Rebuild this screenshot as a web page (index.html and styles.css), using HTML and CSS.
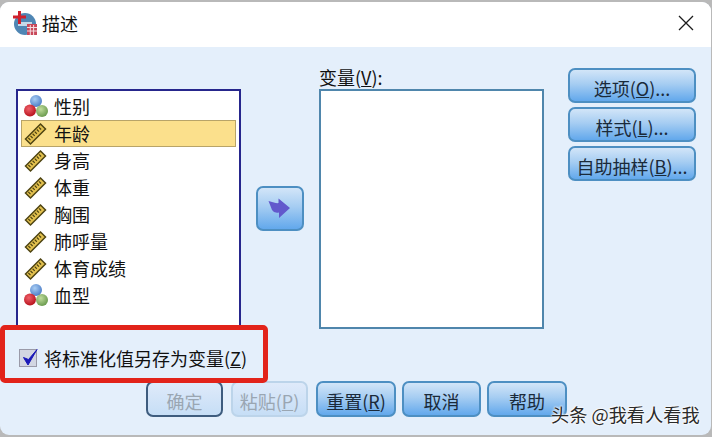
FILE: index.html
```html
<!DOCTYPE html>
<html lang="zh">
<head>
    <meta charset="UTF-8">
    <title>描述</title>
    <link rel="stylesheet" href="styles.css">
</head>
<body>
    <svg class="defs" width="0" height="0">
        <defs>
            <radialGradient id="ballBlue" cx="40%" cy="35%" r="65%">
                <stop offset="0" stop-color="#a8cdf4"/>
                <stop offset="1" stop-color="#4f80c8"/>
            </radialGradient>
            <radialGradient id="ballRed" cx="40%" cy="35%" r="65%">
                <stop offset="0" stop-color="#f0606a"/>
                <stop offset="1" stop-color="#b8141e"/>
            </radialGradient>
            <radialGradient id="ballGreen" cx="40%" cy="35%" r="65%">
                <stop offset="0" stop-color="#c0dc9c"/>
                <stop offset="1" stop-color="#6c9c50"/>
            </radialGradient>
            <g id="ballIcon">
                <circle cx="12" cy="7" r="6" fill="url(#ballBlue)"/>
                <circle cx="18" cy="17" r="6" fill="url(#ballGreen)"/>
                <circle cx="6" cy="16.5" r="6" fill="url(#ballRed)"/>
            </g>
            <g id="rulerIcon">
                <path d="M1.5 18 L16.5 3 L21.5 8 L6.5 23 Z" fill="#e2c04e" stroke="#4e4412" stroke-width="1.5"/>
                <path d="M5 18.5 L17 6.5" stroke="#4e4412" stroke-width="3" stroke-dasharray="1.2 1.8" fill="none"/>
            </g>
        </defs>
    </svg>

    <div class="dialog">
        <div class="titlebar">
            <div class="title">
                <svg class="app-icon" width="26" height="26" viewBox="0 0 26 26">
                    <circle cx="13" cy="14" r="11" fill="#4f86b4"/>
                    <path d="M6 12 H20 V16 H6 Z" fill="#c4d8e8"/>
                    <path d="M7.5 1 V14 M1 7 H14" stroke="#d0202c" stroke-width="3"/>
                    <rect x="15" y="14" width="10" height="11" fill="#c8485a"/>
                    <path d="M15 17.5 H25 M15 21 H25 M18.3 15 V25 M21.6 15 V25" stroke="#f4dce0" stroke-width="1"/>
                </svg>
                <span>描述</span>
            </div>
            <svg class="close" width="16" height="16" viewBox="0 0 16 16">
                <path d="M1 1 L15 15 M15 1 L1 15" stroke="#1c1c1c" stroke-width="1.3" fill="none"/>
            </svg>
        </div>

        <div class="content">
            <div class="main">
                <ul class="source-list">
                    <li><svg class="var-icon" viewBox="0 0 25 25"><use href="#ballIcon"/></svg>性别</li>
                    <li class="selected"><svg class="var-icon" viewBox="0 0 25 25"><use href="#rulerIcon"/></svg>年龄</li>
                    <li><svg class="var-icon" viewBox="0 0 25 25"><use href="#rulerIcon"/></svg>身高</li>
                    <li><svg class="var-icon" viewBox="0 0 25 25"><use href="#rulerIcon"/></svg>体重</li>
                    <li><svg class="var-icon" viewBox="0 0 25 25"><use href="#rulerIcon"/></svg>胸围</li>
                    <li><svg class="var-icon" viewBox="0 0 25 25"><use href="#rulerIcon"/></svg>肺呼量</li>
                    <li><svg class="var-icon" viewBox="0 0 25 25"><use href="#rulerIcon"/></svg>体育成绩</li>
                    <li><svg class="var-icon" viewBox="0 0 25 25"><use href="#ballIcon"/></svg>血型</li>
                </ul>

                <div class="mover">
                    <button class="btn arrow-btn" type="button">
                        <svg width="24" height="22" viewBox="0 0 24 22">
                            <path d="M0.5 3 L4 4 Q8 5.5 10.5 5 V0.5 L22 10 L11 20 V14.5 Q6 15.5 4 12 Z" fill="#6258cc"/>
                        </svg>
                    </button>
                </div>

                <div class="target">
                    <div class="target-label">变量(<u>V</u>):</div>
                    <div class="target-list"></div>
                </div>

                <div class="side-buttons">
                    <button class="btn" type="button">选项(<u>O</u>)...</button>
                    <button class="btn" type="button">样式(<u>L</u>)...</button>
                    <button class="btn" type="button">自助抽样(<u>B</u>)...</button>
                </div>
            </div>

            <label class="save-row">
                <span class="checkbox">
                    <svg width="18" height="18" viewBox="0 0 18 18">
                        <path d="M3.5 8.5 L8 16 L17 0.5 L8.5 10.5 Z" fill="#1a1ab8" stroke="#1a1ab8" stroke-width="1"/>
                    </svg>
                </span>
                <span>将标准化值另存为变量(<u>Z</u>)</span>
            </label>

            <div class="bottom-buttons">
                <button class="btn disabled default" type="button">确定</button>
                <button class="btn disabled" type="button">粘贴(<u>P</u>)</button>
                <button class="btn wide" type="button">重置(<u>R</u>)</button>
                <button class="btn" type="button">取消</button>
                <button class="btn wide" type="button">帮助</button>
            </div>
        </div>

        <div class="highlight"></div>
        <div class="watermark">头条 @我看人看我</div>
    </div>
</body>
</html>
```

FILE: styles.css
```css
html, body {
    margin: 0;
    padding: 0;
}
body {
    width: 712px;
    height: 437px;
    overflow: hidden;
    background-color: #b9b9b9;
    font-family: "Noto Sans CJK SC", "Liberation Sans", sans-serif;
    color: #111;
}
.defs {
    display: block;
    height: 0;
}
.dialog {
    position: relative;
    box-sizing: border-box;
    width: 711px;
    height: 433px;
    margin-top: 2px;
    border-radius: 9px;
    overflow: hidden;
    background-color: #e4effb;
}
.titlebar {
    box-sizing: border-box;
    display: flex;
    justify-content: space-between;
    align-items: center;
    height: 45px;
    padding: 0 17px 3px 12px;
    background-color: #fff;
}
.title {
    display: flex;
    align-items: center;
    gap: 4px;
    font-size: 18px;
    color: #111;
}
.content {
    display: flex;
    flex-direction: column;
}
.main {
    display: flex;
    height: 262px;
    padding: 21px 0 0 16px;
}
.source-list {
    box-sizing: border-box;
    width: 225px;
    height: 241px;
    margin: 21px 0 0;
    padding: 2px 3px 0;
    list-style: none;
    background-color: #fff;
    border: 2px solid #26268c;
    border-bottom: none;
}
.source-list li {
    display: flex;
    align-items: center;
    gap: 5px;
    height: 27px;
    padding-left: 3px;
    font-size: 18px;
    line-height: 27px;
    white-space: nowrap;
}
.source-list li.selected {
    box-sizing: border-box;
    background-color: #fbe08c;
    border: 1px solid #b8a468;
    padding-left: 2px;
}
.var-icon {
    width: 25px;
    height: 25px;
    flex: none;
}
.mover {
    box-sizing: border-box;
    width: 78px;
    padding: 118px 0 0 15px;
}
.btn {
    box-sizing: border-box;
    height: 35px;
    padding: 4px 0 0;
    font-family: inherit;
    font-size: 18px;
    line-height: 1;
    color: #1a2a3a;
    white-space: nowrap;
    border: 2px solid #4d8fc2;
    border-radius: 7px;
    background: linear-gradient(#d2e5f8, #a6cdf2 45%, #62a8ec);
}
.arrow-btn {
    display: flex;
    align-items: center;
    justify-content: center;
    width: 48px;
    height: 45px;
    padding: 0;
}
.target {
    width: 225px;
}
.target-label {
    height: 21px;
    font-size: 18px;
    line-height: 19px;
}
.target-list {
    box-sizing: border-box;
    height: 240px;
    background-color: #fff;
    border: 2px solid #4f86ac;
}
.side-buttons {
    display: flex;
    flex-direction: column;
    gap: 4px;
    width: 128px;
    margin-left: 24px;
}
.save-row {
    display: flex;
    align-items: center;
    gap: 7px;
    height: 40px;
    padding: 8px 0 0 19px;
    font-size: 18px;
    white-space: nowrap;
}
.checkbox {
    box-sizing: border-box;
    display: block;
    width: 18px;
    height: 18px;
    background-color: #d2d6e2;
    border: 1px solid #9a9aa8;
}
.checkbox svg {
    display: block;
    margin: -1px 0 0 0;
}
.bottom-buttons {
    display: flex;
    gap: 6px;
    margin-top: 3px;
    padding-left: 146px;
}
.bottom-buttons .btn {
    width: 79px;
    height: 36px;
}
.bottom-buttons .btn.wide {
    width: 80px;
}
.bottom-buttons .btn.disabled {
    width: 77px;
    margin-right: 2px;
    color: #9aa6b2;
    border-color: #bcd4ea;
    background: linear-gradient(#dfeafa, #c6def6);
}
.bottom-buttons .btn.default {
    border-color: #3e5c7e;
}
.highlight {
    position: absolute;
    left: 0;
    top: 323px;
    box-sizing: border-box;
    width: 268px;
    height: 58px;
    border: 5px solid #e2231a;
    border-radius: 5px;
}
.watermark {
    position: absolute;
    left: 551px;
    top: 400px;
    font-size: 18.2px;
    line-height: 24px;
    color: #2a2a2a;
    white-space: nowrap;
    text-shadow: 0 0 2px #fff, 0 0 2px #fff, 0 0 3px #fff;
}
```
